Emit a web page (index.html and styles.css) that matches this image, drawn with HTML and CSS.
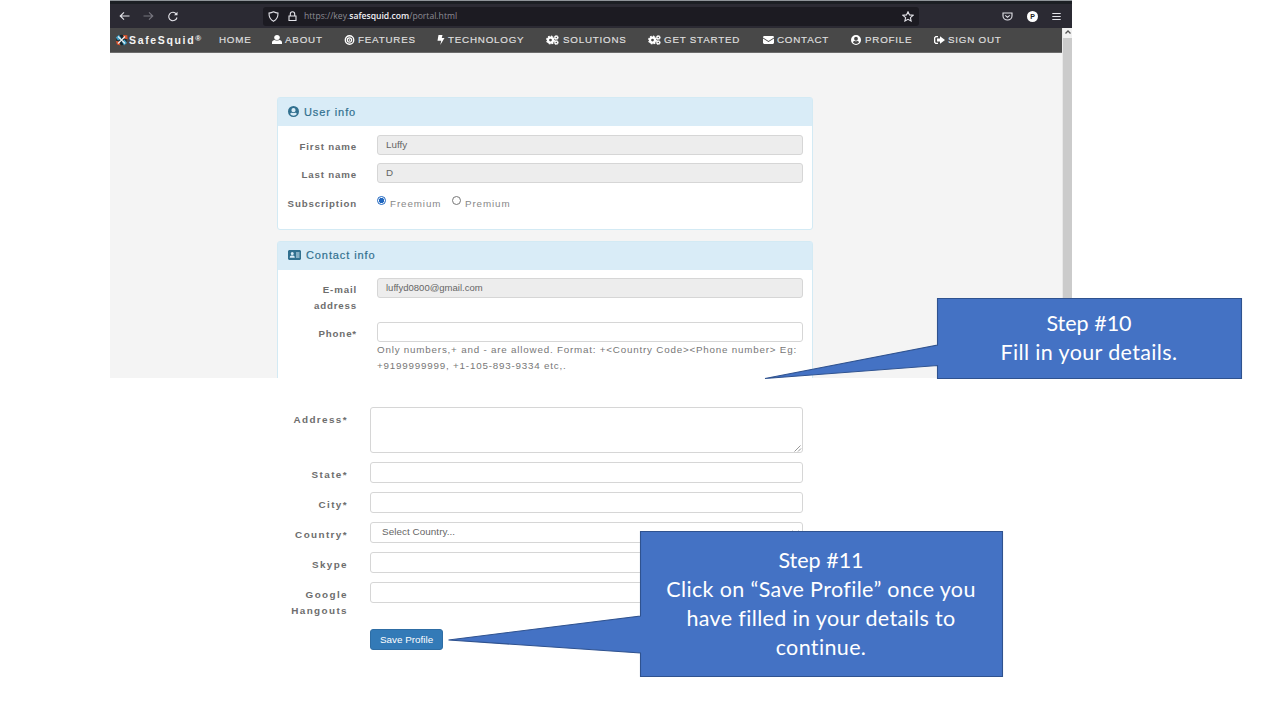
FILE: index.html
```
<!DOCTYPE html>
<html lang="en">
<head>
<meta charset="utf-8">
<title>SafeSquid profile</title>
<link rel="stylesheet" href="styles.css">
</head>
<body>
<svg class="defs" width="0" height="0">
  <symbol id="gears" viewBox="0 0 26 20">
    <g fill="none" stroke="currentColor"><circle cx="9" cy="10" r="5" stroke-width="4.5"/><circle cx="9" cy="10" r="7.6" stroke-width="2.6" stroke-dasharray="3.4 2.57"/>
    <circle cx="20.5" cy="5" r="2.7" stroke-width="2.4"/><circle cx="20.5" cy="5" r="4.3" stroke-width="1.6" stroke-dasharray="2 1.38"/>
    <circle cx="20.5" cy="15" r="2.7" stroke-width="2.4"/><circle cx="20.5" cy="15" r="4.3" stroke-width="1.6" stroke-dasharray="2 1.38"/></g>
  </symbol>
  <symbol id="user-circle" viewBox="0 0 20 20">
    <path fill="currentColor" fill-rule="evenodd" d="M10 0a10 10 0 1 0 0 20 10 10 0 0 0 0-20zM10 3.7a3.8 3.8 0 1 1 0 7.6 3.8 3.8 0 0 1 0-7.6zM3.8 14.6c.7-1.6 2-2.5 3.7-2.5 1.6.7 3.400.7 5 0 1.700 0 3 .9 3.700 2.500A8 8 0 0 1 10 17.800a8 8 0 0 1-6.200-3.200z"/>
  </symbol>
</svg>

<div class="window">
  <div class="toolbar">
    <div class="history">
      <svg width="11" height="10" viewBox="0 0 11 10"><path d="M10.500 5H1.200M5 1.300 1.200 5 5 8.700"/></svg>
      <svg class="dim" width="11" height="10" viewBox="0 0 11 10"><path d="M.5 5h9.300M6 1.300 9.800 5 6 8.700"/></svg>
      <svg width="12" height="11" viewBox="0 0 12 11"><path d="M9.300 3A4.200 4.200 0 1 0 10 6.500"/><path class="tip" d="M10.500.8v3.500H7z"/></svg>
    </div>
    <div class="urlbar">
      <svg class="shield" width="11" height="11" viewBox="0 0 11 11"><path d="M5.500.8C7 1.600 8.400 2 10 2.100c.1 3.800-.9 6.500-4.500 8.200C1.900 8.600.9 5.900 1 2.100 2.600 2 4 1.600 5.500.8z"/></svg>
      <svg class="lock" width="9" height="11" viewBox="0 0 9 11"><path d="M1 5h7v4.500H1zM2.300 5V3a2.200 2.200 0 0 1 4.400 0v2"/></svg>
      <span class="url">https://key.<b>safesquid.com</b>/portal.html</span>
      <svg class="star" width="12" height="11" viewBox="0 0 12 11"><path d="m6 .8 1.500 3.100 3.500.4-2.600 2.300.7 3.400L6 8.300 2.900 10l.7-3.400L1 4.300l3.500-.4z"/></svg>
    </div>
    <div class="tools">
      <svg width="11" height="9" viewBox="0 0 11 9"><path d="M1 1h9v3a4.500 4 0 0 1-9 0zM3.300 3.300 5.500 5.300l2.200-2"/></svg>
      <span class="badge">P</span>
      <svg width="9" height="9" viewBox="0 0 9 9"><path d="M.3 1.500h8.400M.3 4.500h8.400M.3 7.500h8.400"/></svg>
    </div>
  </div>

  <div class="viewport">
    <div class="page">
      <nav class="nav">
        <a class="brand"><svg width="13" height="12" viewBox="0 0 13 12"><circle cx="6.500" cy="6" r="5.200" fill="#14272f"/><path d="M.8 3.500 4 .8l2.500 3.700L3 6.500zM9 11.500l3-2.500-2.500-3.500L7 8z" fill="#3d9cc2"/><path d="M8 1 12.300 1.300l.3 4L9 4.500zM.8 7l3.500.5 1.200 4L2 10.500z" fill="#d9532c"/><path d="m3 2.500 7 7M10 2.500l-7 7" stroke="#e8eef0" stroke-width="1.300"/></svg><span>SafeSquid<sup>®</sup></span></a>
        <a>HOME</a>
        <a><i class="w13"><svg width="10" height="9" viewBox="0 0 18 18" preserveAspectRatio="none"><circle cx="9" cy="5" r="5" fill="currentColor"/><path fill="currentColor" d="M0 18v-3c0-3 2-5 5-5 2.500 1.500 5.500 1.500 8 0 3 0 5 2 5 5v3z"/></svg></i>ABOUT</a>
        <a><i class="w14"><svg width="11" height="10" viewBox="0 0 20 20"><g fill="none" stroke="currentColor"><circle cx="10" cy="10" r="8.500" stroke-width="2.600"/><circle cx="10" cy="10" r="4.400" stroke-width="2.400"/></g><circle cx="10" cy="10" r="1.700" fill="currentColor"/></svg></i>FEATURES</a>
        <a><i class="w11"><svg width="8" height="10" viewBox="0 0 14 20"><path fill="currentColor" d="M2 0h8L8.500 6H14L5.500 20l2-8.500H0z"/></svg></i>TECHNOLOGY</a>
        <a><i class="w17"><svg width="13" height="10"><use href="#gears"/></svg></i>SOLUTIONS</a>
        <a><i class="w16"><svg width="13" height="10"><use href="#gears"/></svg></i>GET STARTED</a>
        <a><i class="w14"><svg width="11" height="8" viewBox="0 0 22 16"><path fill="currentColor" d="M2 0h18l2 1.500v1.500L11 10 0 3V1.500zM0 5l11 7 11-7v9l-2 2H2l-2-2z"/></svg></i>CONTACT</a>
        <a><i class="w14"><svg width="10" height="10"><use href="#user-circle"/></svg></i>PROFILE</a>
        <a><i class="w14"><svg width="11" height="8" viewBox="0 0 22 16"><path fill="none" stroke="currentColor" stroke-width="2.600" d="M8 1.300H3.500L1.300 3.500v9l2.200 2.200H8"/><path fill="currentColor" d="M6 5h6V.5L22 8l-10 7.500V11H6z"/></svg></i>SIGN OUT</a>
      </nav>

      <section class="panel">
        <h2><svg width="11" height="11"><use href="#user-circle"/></svg>User info</h2>
        <div class="fields">
          <div class="row"><label>First name</label><div class="input off">Luffy</div></div>
          <div class="row"><label>Last name</label><div class="input off">D</div></div>
          <div class="row"><label>Subscription</label><div class="radios"><span class="radio on"></span><span class="opt first">Freemium</span><span class="radio"></span><span class="opt">Premium</span></div></div>
        </div>
      </section>

      <section class="panel contact">
        <h2><svg width="13" height="10" viewBox="0 0 26 20"><path fill="currentColor" fill-rule="evenodd" d="M2 0h22l2 2v16l-2 2H2l-2-2V2zM8.500 4a3 3 0 1 0 0 6 3 3 0 0 0 0-6zM3.500 15.500h10c0-3-1.500-4.500-3.500-4.500H7c-2 0-3.500 1.500-3.500 4.500zM16 5v2h7V5zm0 4v2h7V9zm0 4v2h7v-2z"/></svg>Contact info</h2>
        <div class="fields">
          <div class="row tall"><label>E-mail<br>address</label><div class="input off mail">luffyd0800@gmail.com</div></div>
          <div class="row"><label>Phone*</label><div><div class="input"></div><p class="help">Only numbers,+ and - are allowed. Format: +&lt;Country Code&gt;&lt;Phone number&gt; Eg:<br>+9199999999, +1-105-893-9334 etc,.</p></div></div>
        </div>
      </section>
    </div>
    <div class="scrollbar"><svg width="10" height="9" viewBox="0 0 10 9"><path d="M2.500 5.500 5 3l2.500 2.500" fill="none" stroke="#555" stroke-width="1.300"/></svg></div>
  </div>
</div>

<form class="details">
  <div class="row"><label>Address*</label><div class="input area"><svg class="grip" width="8" height="8" viewBox="0 0 8 8"><path d="M.5 7.500l6-6M4 7.500 7 4.500" stroke="#999" fill="none"/></svg></div></div>
  <div class="row"><label>State*</label><div class="input"></div></div>
  <div class="row"><label>City*</label><div class="input"></div></div>
  <div class="row"><label>Country*</label><div class="input select">Select Country...<svg width="7" height="5" viewBox="0 0 7 5"><path d="M.5.5 3.500 4l3-3.500" fill="none" stroke="#aaa"/></svg></div></div>
  <div class="row"><label>Skype</label><div class="input"></div></div>
  <div class="row"><label>Google<br>Hangouts</label><div class="input"></div></div>
  <div class="save">Save Profile</div>
</form>

<aside class="callout ten">
  <svg width="479" height="82" viewBox="0 0 479 82"><path d="M173.500.5h304v80h-304V67.500L1 80.500 173.500 47z"/></svg>
  <div class="note"><span class="t1">Step #10</span><span class="t2">Fill in your details.</span></div>
</aside>
<aside class="callout eleven">
  <svg width="556" height="147" viewBox="0 0 556 147"><path d="M192.500.5h362v145h-362v-23.500L.5 109 192.500 85z"/></svg>
  <div class="note"><span class="t1">Step #11</span><span class="t3">Click on “Save Profile” once you</span><span class="t4">have filled in your details to</span><span class="t5">continue.</span></div>
</aside>
</body>
</html>
```
FILE: styles.css
```
* { box-sizing: border-box; }
body { margin: 0; width: 1280px; height: 720px; overflow: hidden; position: relative; background: #fff; font-family: "Liberation Sans", Arial, sans-serif; font-size: 9.8px; letter-spacing: .9px; color: #777; }
.defs { position: absolute; }
svg { display: block; flex: none; }

.window { width: 962.500px; height: 378px; margin-left: 109.500px; overflow: hidden; background: #f4f4f4; }
.toolbar { height: 28px; padding: 3px 11px 0 9px; display: flex; align-items: center; background: #2b2a33; border-top: 1px solid #8f9499; box-shadow: inset 0 3px 0 #1c1f24; }
.toolbar svg { fill: none; stroke: #e4e4ea; stroke-width: 1.1; }
.toolbar .dim { stroke: #77767f; }
.toolbar .tip { fill: #e4e4ea; stroke: none; }
.history { display: flex; gap: 13px; width: 144px; align-items: center; }
.urlbar { width: 656px; height: 19px; border-radius: 3px; background: #1c1b22; display: flex; align-items: center; padding: 0 5px; letter-spacing: 0; }
.lock { margin-left: 9px; }
.url { margin-left: 7.500px; flex: 1; font-family: "Open Sans", sans-serif; font-size: 8.600px; color: #8d8c94; white-space: nowrap; }
.url b { font-weight: 600; color: #f0f0f4; }
.tools { margin-left: auto; display: flex; align-items: center; gap: 14px; }
.badge { width: 11px; height: 11px; border-radius: 50%; background: #fff; color: #222; font-size: 7px; line-height: 11px; font-weight: bold; letter-spacing: 0; text-align: center; }

.viewport { display: flex; height: 350px; }
.page { width: 952px; }
.scrollbar { width: 10.500px; background: linear-gradient(#f1f1f1 10px, #cbcbcb 10px); border-left: 1px solid #e8e8e8; }
.nav { height: 25px; padding: 0 0 1px 5.500px; display: grid; grid-template-columns: 104px 53px 72px 93px 109px 102px 115px 88px 83px 1fr; align-items: center; background: #484848; border-bottom: 1px solid #6c6c6c; color: #dedede; letter-spacing: .78px; -webkit-text-stroke: .2px currentColor; white-space: nowrap; }
.nav a { display: flex; align-items: center; }
.nav i { flex: none; color: #fff; }
.w11 { width: 11px; } .w13 { width: 13px; } .w14 { width: 14px; } .w16 { width: 16px; } .w17 { width: 17px; }
.brand { font-weight: bold; color: #f4f4f4; font-size: 10.500px; letter-spacing: 1.650px; -webkit-text-stroke: 0; }
.brand span { margin-left: 1px; line-height: 12px; }
.brand sup { font-size: 8px; line-height: 0; vertical-align: 3px; letter-spacing: 0; }

.panel { width: 536px; height: 132.500px; margin: 44px 0 0 167.500px; background: #fff; border: 1px solid #d3eaf4; border-radius: 3px; }
.panel h2 { margin: 0; height: 28px; padding: 0 10px 1px; display: flex; align-items: center; gap: 5px; background: #d9ecf7; color: #31708f; font-size: 11px; font-weight: normal; -webkit-text-stroke: .2px currentColor; }
.fields { padding: 9px 10px 0 0; display: flex; flex-direction: column; gap: 8px; }
.row { display: grid; grid-template-columns: 79px 426px; column-gap: 20px; height: 20.300px; }
.tall { height: 36px; }
label { font-weight: bold; text-align: right; line-height: 16px; padding-top: 4px; color: #6d6d6d; font-size: 9.700px; letter-spacing: .850px; white-space: nowrap; }
.input { height: 20px; border: 1px solid #d6d6d6; border-radius: 3px; background: #fff; padding-left: 8px; line-height: 18px; letter-spacing: 0; color: #666; }
.off { background: #ededed; }
.mail { font-size: 9.500px; }
.radios { display: flex; align-items: flex-start; height: 20px; color: #888; }
.radio { width: 9px; height: 9px; margin-top: 4px; border: 1px solid #777; border-radius: 50%; }
.on { border-color: #1f66bf; background: radial-gradient(#1f66bf 2.300px, #fff 3px); }
.opt { margin: 6px 0 0 4px; line-height: 12px; }
.first { width: 62px; }
.contact { height: 150px; margin-top: 11px; }
.contact .fields { padding-top: 8.500px; }
.help { margin: 0; line-height: 15.700px; letter-spacing: .8px; white-space: nowrap; color: #777; }

.details { margin: 28.500px 0 0 248px; width: 555px; display: flex; flex-direction: column; gap: 9px; }
.details .row { grid-template-columns: 100px 433px; column-gap: 22px; height: 21.200px; }
.details .row:first-child { height: 46px; }
.details .input { height: 21.200px; }
.details label { padding-top: 5px; font-size: 9.900px; letter-spacing: 1.400px; }
.details .area { height: 46px; display: flex; align-items: flex-end; justify-content: flex-end; }
.details .select { padding: 0 3px 0 11px; display: flex; align-items: center; justify-content: space-between; font-size: 9.900px; letter-spacing: .05px; }
.save { width: 73px; height: 21px; margin: 16.500px 0 0 122px; border: 1px solid #2e6da4; border-radius: 3px; background: #337ab7; color: #fff; font-size: 9.900px; letter-spacing: 0; line-height: 19px; text-align: center; }

.callout { position: absolute; color: #fff; }
.callout path { fill: #4472c4; stroke: #2f528f; stroke-width: 1.100; }
.ten { left: 764px; top: 298px; }
.eleven { left: 448px; top: 531px; }
.note { position: absolute; top: 0; right: 0; bottom: 2px; display: flex; flex-direction: column; align-items: center; justify-content: center; font: 21.500px/29px Lato, sans-serif; font-variant-ligatures: none; letter-spacing: .36px; white-space: nowrap; }
.ten .note { width: 308px; }
.eleven .note { width: 366px; }
.t1 { letter-spacing: 0; }
```
